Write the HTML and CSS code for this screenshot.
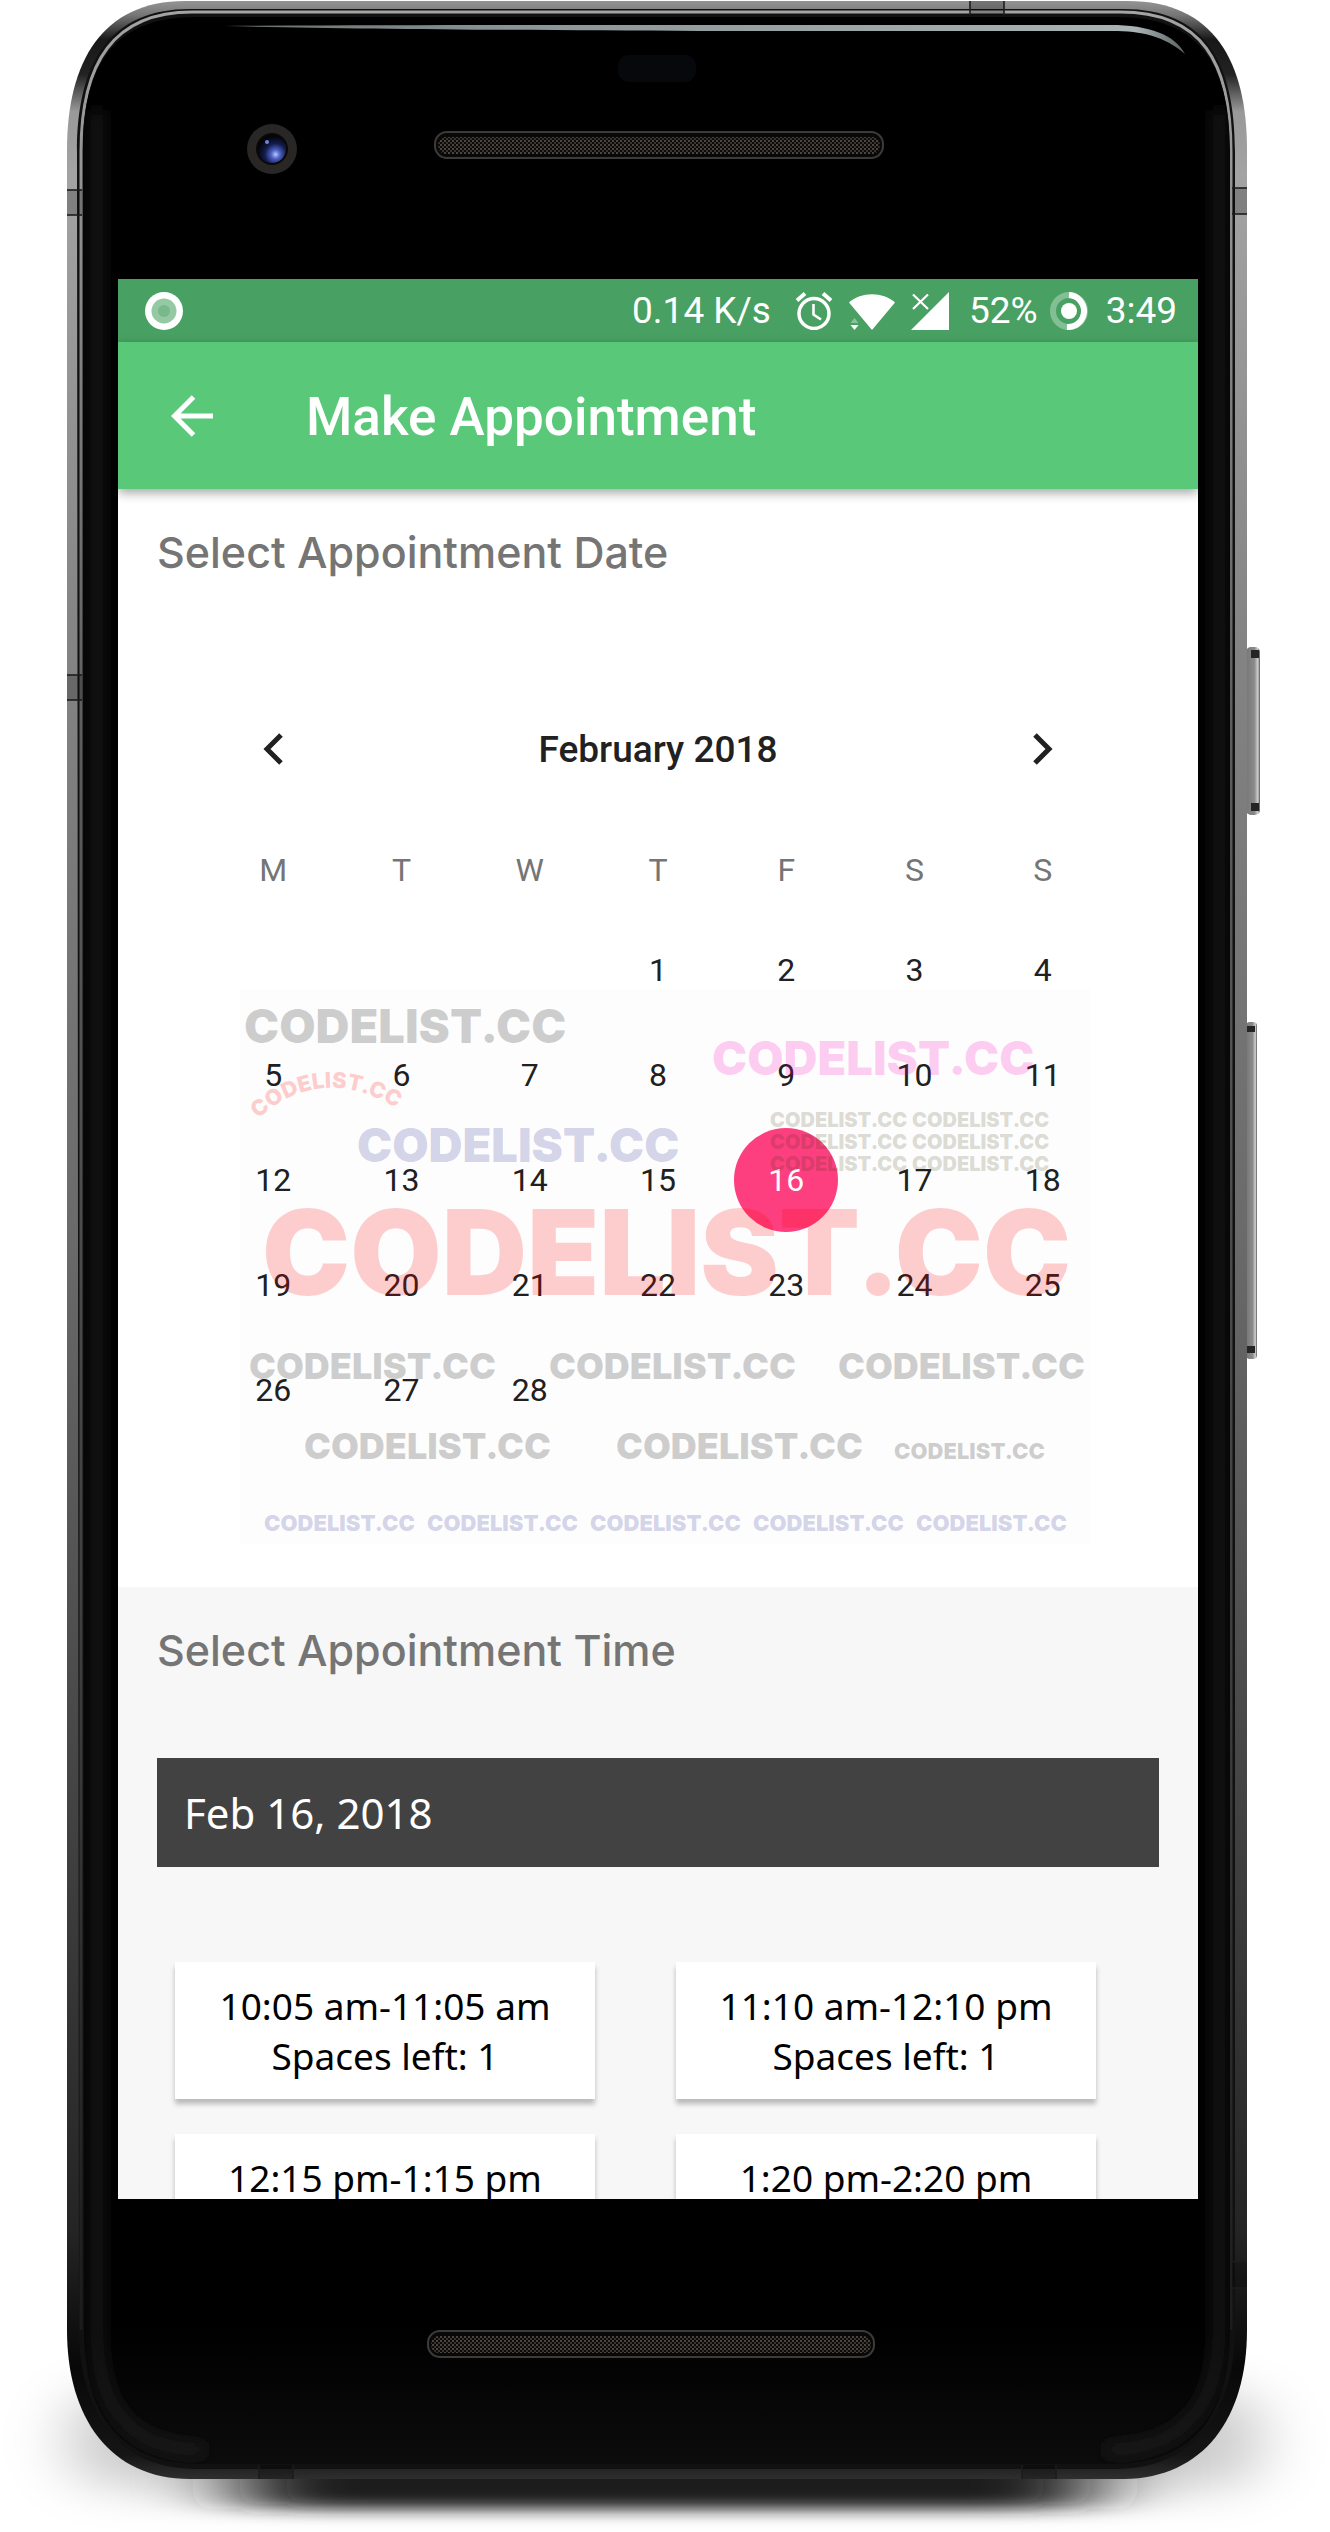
FILE: index.html
```html
<!DOCTYPE html>
<html lang="en">
<head>
<meta charset="utf-8">
<meta name="viewport" content="width=device-width, initial-scale=1">
<title>Make Appointment</title>
<link rel="stylesheet" href="styles.css">
</head>
<body>
<div class="stage">
  <svg class="device" viewBox="0 0 1330 2532" preserveAspectRatio="none" aria-hidden="true">
    <defs>
      <linearGradient id="rim" x1="0" y1="0" x2="0" y2="2480" gradientUnits="userSpaceOnUse">
        <stop offset="0" stop-color="#969696"/>
        <stop offset="0.006" stop-color="#777"/>
        <stop offset="0.016" stop-color="#181818"/>
        <stop offset="0.03" stop-color="#222"/>
        <stop offset="0.045" stop-color="#999"/>
        <stop offset="0.07" stop-color="#a3a3a3"/>
        <stop offset="0.25" stop-color="#858585"/>
        <stop offset="0.5" stop-color="#6a6a6a"/>
        <stop offset="0.7" stop-color="#484848"/>
        <stop offset="0.9" stop-color="#242424"/>
        <stop offset="0.955" stop-color="#080808"/>
        <stop offset="0.99" stop-color="#151515"/>
        <stop offset="1" stop-color="#303030"/>
      </linearGradient>
      <linearGradient id="bevel" x1="0" y1="0" x2="0" y2="2480" gradientUnits="userSpaceOnUse">
        <stop offset="0" stop-color="#a5a5a5"/>
        <stop offset="0.3" stop-color="#5c5c5c"/>
        <stop offset="0.7" stop-color="#3b3b3b"/>
        <stop offset="1" stop-color="#141414"/>
      </linearGradient>
      <linearGradient id="glass" x1="0" y1="2330" x2="0" y2="2465" gradientUnits="userSpaceOnUse">
        <stop offset="0" stop-color="#000"/>
        <stop offset="1" stop-color="#0c0c0c"/>
      </linearGradient>
      <linearGradient id="glint" x1="228" y1="0" x2="1184" y2="0" gradientUnits="userSpaceOnUse">
        <stop offset="0" stop-color="#66706f"/>
        <stop offset="0.3" stop-color="#8b9597"/>
        <stop offset="0.95" stop-color="#a9b3b4"/>
        <stop offset="1" stop-color="#5a6262"/>
      </linearGradient>
      <linearGradient id="key" x1="0" y1="0" x2="1" y2="0">
        <stop offset="0" stop-color="#777"/>
        <stop offset="0.6" stop-color="#8a8a8a"/>
        <stop offset="0.85" stop-color="#d0d0d0"/>
        <stop offset="1" stop-color="#555"/>
      </linearGradient>
      <radialGradient id="lens" cx="0.62" cy="0.68" r="0.6">
        <stop offset="0" stop-color="#b9c4ff"/>
        <stop offset="0.25" stop-color="#4c62c4"/>
        <stop offset="0.6" stop-color="#141c4c"/>
        <stop offset="1" stop-color="#04050c"/>
      </radialGradient>
      <pattern id="mesh" width="4" height="4" patternUnits="userSpaceOnUse">
        <rect width="4" height="4" fill="#0c0b0a"/>
        <rect width="2" height="2" fill="#4a463f"/>
        <rect x="2" y="2" width="2" height="2" fill="#38352f"/>
      </pattern>
      <filter id="soft" x="-20%" y="-100%" width="140%" height="300%"><feGaussianBlur stdDeviation="50 8"/></filter>
      <filter id="wide" x="-20%" y="-50%" width="140%" height="200%"><feGaussianBlur stdDeviation="32 20"/></filter>
      <filter id="glow" x="0" y="0" width="1330" height="2532" filterUnits="userSpaceOnUse"><feGaussianBlur stdDeviation="8"/></filter>
      <clipPath id="face"><path d="M83 150C83 60 118 17 195 17H1118C1196 17 1230 60 1230 150V2330C1230 2420 1190 2464 1112 2464H200C124 2464 84 2420 84 2330Z"/></clipPath>
    </defs>

    <rect x="70" y="2390" width="1190" height="98" rx="40" fill="#000" fill-opacity="0.2" filter="url(#wide)"/>
    <rect x="240" y="2440" width="850" height="69" rx="20" fill="#1c1c1c" filter="url(#soft)"/>

    <rect x="1246" y="647" width="14" height="168" rx="5" fill="url(#key)"/>
    <path d="M1251 650h8v8h-8zM1251 803h8v8h-8z" fill="#252525"/>
    <rect x="1246" y="1022" width="11" height="337" rx="4" fill="url(#key)"/>
    <path d="M1247 1026h8v6h-8zM1247 1346h8v7h-8z" fill="#252525"/>

    <path fill="url(#rim)" d="M67 150C67 62 102 1 185 1H1128C1214 1 1247 62 1247 150V2330C1247 2418 1204 2478 1124 2479H190C110 2479 67 2418 67 2330Z"/>
    <path fill="#111" d="M77 152C77 62 110 9 190 9H1123C1205 9 1235 62 1235 152V2330C1235 2414 1192 2469 1116 2469H196C120 2469 79 2414 79 2330Z"/>
    <path fill="none" stroke="url(#bevel)" stroke-width="3" d="M81 2330V152C81 62 114 12 192 12H1120C1202 12 1231 62 1231 152V2330"/>

    <g clip-path="url(#face)">
      <rect x="80" y="14" width="1154" height="2452" fill="url(#glass)"/>
      <path fill="none" stroke="#252525" stroke-width="8" filter="url(#glow)" d="M97 110V2330C97 2410 130 2450 205 2450M1105 2450C1180 2450 1219 2410 1219 2330V110"/>
    </g>
    <path fill="url(#glint)" d="M225 26C400 25 560 25 700 25H1110C1150 25 1175 35 1185 54C1164 36 1142 31 1112 31H700C520 30 350 29 225 26Z"/>

    <path fill="#000" fill-opacity="0.2" d="M67 190h15v25h-15zM67 675h15v25h-15zM1232 188h15v26h-15zM1232 2262h15v26h-15zM970 1h34v14h-34zM259 2465h34v14h-34zM1022 2465h34v14h-34z"/>
    <path fill="none" stroke="#1c1c1c" stroke-opacity=".8" stroke-width="2" d="M67 190h15M67 215h15M67 675h15M67 700h15M1232 188h15M1232 214h15M1232 2262h15M1232 2288h15M970 1v14M1004 1v14M259 2465v14M293 2465v14M1022 2465v14M1056 2465v14"/>

    <rect x="618" y="55" width="78" height="27" rx="11" fill="#07080c"/>
    <circle cx="272" cy="149" r="25" fill="#292626"/>
    <circle cx="272" cy="149" r="15" fill="url(#lens)" stroke="#0a0909" stroke-width="2"/>
    <circle cx="267" cy="142" r="2" fill="#7383d8"/>
    <rect x="435" y="132" width="448" height="26" rx="12" fill="#080808" stroke="#3d3b39" stroke-width="2"/>
    <rect x="438" y="137" width="442" height="17" rx="8" fill="url(#mesh)"/>
    <rect x="428" y="2331" width="446" height="26" rx="12" fill="#080808" stroke="#3d3b39" stroke-width="2"/>
    <rect x="431" y="2336" width="440" height="17" rx="8" fill="url(#mesh)"/>
  </svg>

  <main class="screen">
    <div class="status">
      <svg class="status-app" viewBox="0 0 38 38" width="38" height="38" aria-hidden="true">
        <circle cx="19" cy="19" r="19" fill="#fff"/><circle cx="19" cy="19" r="12.5" fill="#94c9a3"/><circle cx="19" cy="19" r="6" fill="#77b98a"/>
      </svg>
      <span>0.14 K/s</span>
      <svg class="alarm" viewBox="0 0 38 38" width="38" height="38" fill="none" stroke="#fff" aria-hidden="true">
        <circle cx="19" cy="21.500" r="15" stroke-width="3.500"/>
        <path d="M18.500 12v10.500l7.500 5" stroke-width="2.600"/>
        <path d="M2 8.500L10 1.500M28 1.500L36 8.500" stroke-width="4"/>
      </svg>
      <svg class="wifi" viewBox="0 0 46 38" width="46" height="38" fill="#fff" aria-hidden="true">
        <path d="M0 10.500C12-.5 34-.5 46 10.500L23 38Z"/><path d="M1.500 33h8l-4 5z"/><path d="M1.500 31h8l-4-5z" opacity=".35"/>
      </svg>
      <svg class="signal" viewBox="0 0 38 38" width="38" height="38" fill="#fff" aria-hidden="true">
        <path d="M38 0V38H0Z"/><path d="M2 2.500L17 17M17 2.500L2 17" stroke="#fff" stroke-width="2.200"/>
      </svg>
      <span>52%</span>
      <svg class="battery" viewBox="0 0 38 38" width="38" height="38" fill="none" stroke-width="6" aria-hidden="true">
        <circle cx="19" cy="19" r="16" stroke="#fff" stroke-opacity=".32"/>
        <path d="M19 3A16 16 0 1 1 17 35" stroke="#fff"/>
        <circle cx="19" cy="19" r="8" fill="#fff"/>
      </svg>
      <span>3:49</span>
    </div>

    <header class="appbar">
      <button class="back" type="button" aria-label="Back">
        <svg viewBox="0 0 42 42" width="42" height="42" fill="none" stroke="#fff" stroke-width="5" aria-hidden="true"><path d="M42 21H4M22.500 2L3.500 21L22.500 40"/></svg>
      </button>
      <h1>Make Appointment</h1>
    </header>

    <section class="date">
      <h2>Select Appointment Date</h2>
      <div class="calendar">
        <div class="month">
          <button type="button" aria-label="Previous month"><svg viewBox="0 0 20 32" width="20" height="32" fill="none" stroke="#212121" stroke-width="5" aria-hidden="true"><path d="M18 2L4 16L18 30"/></svg></button>
          <h3>February 2018</h3>
          <button type="button" aria-label="Next month"><svg viewBox="0 0 20 32" width="20" height="32" fill="none" stroke="#212121" stroke-width="5" aria-hidden="true"><path d="M2 2L16 16L2 30"/></svg></button>
        </div>
        <table>
          <thead><tr><th>M</th><th>T</th><th>W</th><th>T</th><th>F</th><th>S</th><th>S</th></tr></thead>
          <tbody>
            <tr><td></td><td></td><td></td><td><button type="button">1</button></td><td><button type="button">2</button></td><td><button type="button">3</button></td><td><button type="button">4</button></td></tr>
            <tr><td><button type="button">5</button></td><td><button type="button">6</button></td><td><button type="button">7</button></td><td><button type="button">8</button></td><td><button type="button">9</button></td><td><button type="button">10</button></td><td><button type="button">11</button></td></tr>
            <tr><td><button type="button">12</button></td><td><button type="button">13</button></td><td><button type="button">14</button></td><td><button type="button">15</button></td><td><button type="button" class="selected" aria-pressed="true">16</button></td><td><button type="button">17</button></td><td><button type="button">18</button></td></tr>
            <tr><td><button type="button">19</button></td><td><button type="button">20</button></td><td><button type="button">21</button></td><td><button type="button">22</button></td><td><button type="button">23</button></td><td><button type="button">24</button></td><td><button type="button">25</button></td></tr>
            <tr><td><button type="button">26</button></td><td><button type="button">27</button></td><td><button type="button">28</button></td><td></td><td></td><td></td><td></td></tr>
          </tbody>
        </table>
      </div>
      <svg class="watermark" viewBox="0 0 850 555">
        <defs><path id="arc" d="M18 130Q92 63 186 140"/></defs>
        <rect width="850" height="555" fill="#000" fill-opacity=".008"/>
        <g fill="#000" fill-opacity=".19">
          <text class="wm-l" x="4" y="54">CODELIST.CC</text>
          <text class="wm-m" x="9" y="390">CODELIST.CC</text>
          <text class="wm-m" x="309" y="390">CODELIST.CC</text>
          <text class="wm-m" x="598" y="390">CODELIST.CC</text>
          <text class="wm-m" x="64" y="470">CODELIST.CC</text>
          <text class="wm-m" x="376" y="470">CODELIST.CC</text>
          <text class="wm-s" x="654" y="470">CODELIST.CC</text>
        </g>
        <g fill="#f00" fill-opacity=".19">
          <text class="wm-xl" x="22" y="306">CODELIST.CC</text>
          <text class="wm-s"><textPath href="#arc">CODELIST.CC</textPath></text>
        </g>
        <g fill="#000080" fill-opacity=".18">
          <text class="wm-l" x="117" y="173">CODELIST.CC</text>
          <text class="wm-s" x="24" y="542">CODELIST.CC</text>
          <text class="wm-s" x="187" y="542">CODELIST.CC</text>
          <text class="wm-s" x="350" y="542">CODELIST.CC</text>
          <text class="wm-s" x="513" y="542">CODELIST.CC</text>
          <text class="wm-s" x="676" y="542">CODELIST.CC</text>
        </g>
        <text class="wm-l" x="472" y="86" fill="#ff00c0" fill-opacity=".19">CODELIST.CC</text>
        <g fill="#303000" fill-opacity=".18">
          <text class="wm-xs" x="530" y="138">CODELIST.CC</text><text class="wm-xs" x="672" y="138">CODELIST.CC</text>
          <text class="wm-xs" x="530" y="160">CODELIST.CC</text><text class="wm-xs" x="672" y="160">CODELIST.CC</text>
          <text class="wm-xs" x="530" y="182">CODELIST.CC</text><text class="wm-xs" x="672" y="182">CODELIST.CC</text>
        </g>
      </svg>
    </section>

    <section class="time">
      <h2>Select Appointment Time</h2>
      <p class="day">Feb 16, 2018</p>
      <div class="slots">
        <button type="button">10:05 am-11:05 am<br>Spaces left: 1</button>
        <button type="button">11:10 am-12:10 pm<br>Spaces left: 1</button>
        <button type="button">12:15 pm-1:15 pm</button>
        <button type="button">1:20 pm-2:20 pm</button>
      </div>
    </section>
  </main>
</div>
</body>
</html>
```
FILE: styles.css
```css
* { box-sizing: border-box; }
body { margin: 0; background: #fff; font-family: Roboto, "Liberation Sans", sans-serif; }
h1, h2, h3, p { margin: 0; }
button { border: 0; padding: 0; background: none; font: inherit; color: inherit; cursor: pointer; }
svg { display: block; }

.stage { position: relative; padding: 279px 132px 333px 118px; overflow: hidden; }
.device { position: absolute; inset: 0; width: 100%; height: 100%; }
.screen { position: relative; display: flex; flex-direction: column; aspect-ratio: 9 / 16; overflow: hidden; background: #f7f7f7; }

.status { flex: none; display: flex; align-items: center; height: 63px; padding: 0 21px 0 27px; background: #48a162; color: #fff; font-size: 37px; line-height: 63px; }
.status-app { margin-right: auto; }
.alarm { margin-left: 24px; }
.wifi { margin-left: 16px; }
.signal { margin: 0 20px 0 16px; }
.battery { margin: 0 18px 0 12px; }

.appbar { position: relative; z-index: 1; flex: none; display: flex; align-items: center; height: 147px; background: #59c979; color: #fff; box-shadow: 0 4px 10px rgba(0, 0, 0, .35); }
.back { display: grid; place-items: center; width: 148px; height: 100%; }
.appbar h1 { margin-left: 40px; padding-top: 3px; font-size: 53px; font-weight: 500; line-height: 60px; }

h2 { color: #757575; font: 500 43px/50px Inter, "Open Sans", sans-serif; font-optical-sizing: none; }

.date { position: relative; flex: none; padding: 38px 39px 145px; background: #fff; }
.calendar { margin: 124px 52px 0; color: #212121; }
.month { display: flex; align-items: center; justify-content: space-between; height: 96px; margin-bottom: 25px; }
.month h3 { font-size: 37px; font-weight: 500; }
.month button { display: grid; place-items: center; width: 128px; height: 96px; }
.calendar table { width: 100%; table-layout: fixed; border-collapse: collapse; font-size: 32px; text-align: center; }
.calendar th { height: 95px; padding: 0; color: #757575; font-weight: 400; }
.calendar td { height: 105px; padding: 0; }
.calendar td button { width: 104px; height: 104px; border-radius: 50%; }
.calendar .selected { background: #ff4081; color: #fff; }

.watermark { position: absolute; left: 122px; right: 108px; top: 500px; pointer-events: none; font-family: Inter, "Liberation Sans", sans-serif; font-weight: 900; }
.wm-xl { font-size: 118px; }
.wm-l { font-size: 47px; }
.wm-m { font-size: 36px; }
.wm-s { font-size: 22px; }
.wm-xs { font-size: 20px; }

.time { flex: none; padding: 38px 39px 36px; }
.day { margin-top: 83px; padding: 0 27px; background: #424242; color: #fff; font: 42px/109px "Noto Sans", sans-serif; }
.slots { display: grid; grid-template-columns: 1fr 1fr; gap: 35px 81px; margin: 95px 63px 0 18px; }
.slots button { display: flex; justify-content: center; align-items: flex-start; min-height: 137px; padding: 19px 0 18px; background: #fff; color: #000; font: 37px/50px "Noto Sans", sans-serif; box-shadow: 0 5px 5px rgba(0, 0, 0, .25); }
```
